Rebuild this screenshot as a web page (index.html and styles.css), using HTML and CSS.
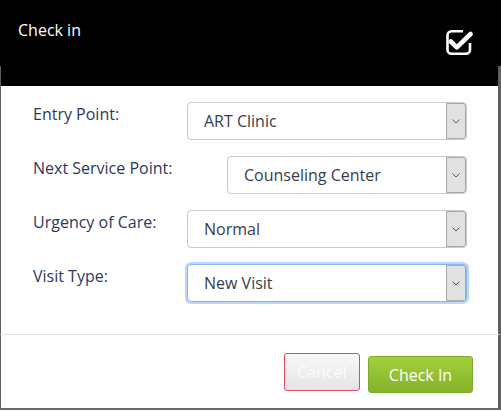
FILE: index.html
```html
<!DOCTYPE html>
<html>
<head>
<meta charset="utf-8">
<link rel="stylesheet" href="styles.css">
</head>
<body>
<div class="modal">
  <div class="modal-header">
    <div class="title">Check in</div>
    <svg class="check-icon" width="28" height="26" viewBox="0 0 28 26">
      <path d="M17 2.3 H5.5 A4 4 0 0 0 1.5 6.3 V20.7 A4 4 0 0 0 5.5 24.7 H20 A4 4 0 0 0 24 20.7 V14" fill="none" stroke="#fff" stroke-width="2.6"/>
      <path d="M4.8 12.5 L10.8 18.3 L24.6 5" fill="none" stroke="#fff" stroke-width="4.6" stroke-linejoin="round" stroke-linecap="round"/>
    </svg>
  </div>
  <div class="modal-body">
    <div class="row">
      <div class="label">Entry Point:</div>
      <div class="select"><span class="value">ART Clinic</span><span class="arrow"><svg width="8" height="5" viewBox="0 0 8 5"><path d="M0.5 0.5 L4 4 L7.5 0.5" fill="none" stroke="#555" stroke-width="1"/></svg></span></div>
    </div>
    <div class="row">
      <div class="label">Next Service Point:</div>
      <div class="select select-short"><span class="value">Counseling Center</span><span class="arrow"><svg width="8" height="5" viewBox="0 0 8 5"><path d="M0.5 0.5 L4 4 L7.5 0.5" fill="none" stroke="#555" stroke-width="1"/></svg></span></div>
    </div>
    <div class="row">
      <div class="label">Urgency of Care:</div>
      <div class="select"><span class="value">Normal</span><span class="arrow"><svg width="8" height="5" viewBox="0 0 8 5"><path d="M0.5 0.5 L4 4 L7.5 0.5" fill="none" stroke="#555" stroke-width="1"/></svg></span></div>
    </div>
    <div class="row">
      <div class="label">Visit Type:</div>
      <div class="select select-focus"><span class="value">New Visit</span><span class="arrow"><svg width="8" height="5" viewBox="0 0 8 5"><path d="M0.5 0.5 L4 4 L7.5 0.5" fill="none" stroke="#555" stroke-width="1"/></svg></span></div>
    </div>
  </div>
  <div class="modal-footer">
    <button class="btn btn-cancel">Cancel</button>
    <button class="btn btn-primary">Check In</button>
  </div>
</div>
</body>
</html>
```

FILE: styles.css
```css
html, body {
  margin: 0;
  padding: 0;
  background: #fff;
}
body {
  width: 501px;
  height: 411px;
  overflow: hidden;
  font-family: "Open Sans", "Liberation Sans", sans-serif;
}
.modal {
  display: flex;
  flex-direction: column;
  height: 411px;
  box-sizing: border-box;
}
.modal-header {
  height: 86px;
  box-sizing: border-box;
  display: flex;
  justify-content: space-between;
  align-items: flex-start;
  padding: 19px 27px 0 18px;
  background:
    linear-gradient(#000 66px, transparent 66px),
    linear-gradient(to right, #5f5f5f 1px, #000 1px, #000 calc(100% - 3px), #5f5f5f calc(100% - 3px));
}
.title {
  color: #fff;
  font-size: 16px;
  line-height: 22px;
}
.check-icon {
  display: block;
  margin-top: 10px;
}
.modal-body {
  border-left: 1px solid #5f5f5f;
  border-right: 3px solid #5f5f5f;
  padding: 16px 0 32px 32px;
  display: flex;
  flex-direction: column;
  gap: 16px;
  border-bottom: 1px solid #e5e5e5;
}
.row {
  display: flex;
  align-items: flex-start;
}
.label {
  width: 154px;
  flex: none;
  font-size: 16px;
  line-height: 22px;
  padding-top: 1px;
  color: #2f385c;
}
.select {
  width: 280px;
  height: 38px;
  box-sizing: border-box;
  border: 1px solid #c9c9d0;
  border-radius: 4px;
  background: #fff;
  display: flex;
  align-items: stretch;
  justify-content: space-between;
}
.select-short {
  width: 240px;
  margin-left: 40px;
}
.select-focus {
  border-color: #86b6ef;
  box-shadow: 0 0 0 2px #bcd7fb;
}
.value {
  display: flex;
  align-items: center;
  padding-left: 16px;
  font-size: 16px;
  color: #373c50;
}
.arrow {
  width: 20px;
  box-sizing: border-box;
  background: #e1e1e1;
  border: 1px solid #a9a9a9;
  border-radius: 0 3px 3px 0;
  display: flex;
  align-items: center;
  justify-content: center;
}
.arrow svg {
  display: block;
}
.modal-footer {
  flex: 1;
  border-left: 1px solid #5f5f5f;
  border-right: 3px solid #5f5f5f;
  border-bottom: 2px solid #6a6a6a;
  margin-bottom: 1px;
  display: flex;
  justify-content: flex-end;
  align-items: flex-start;
  gap: 8px;
  padding: 18px 25px 0 0;
}
.btn {
  font-family: "Open Sans", "Liberation Sans", sans-serif;
  font-size: 16px;
  border-radius: 3px;
  padding: 0;
  margin: 0;
  cursor: pointer;
}
.btn-cancel {
  width: 76px;
  height: 38px;
  border: 1px solid #df4a5f;
  background: linear-gradient(#f8f8f8, #e4e4e4);
  color: #fbfbfb;
}
.btn-primary {
  width: 105px;
  height: 37px;
  margin-top: 3px;
  border: 1px solid #7fa92c;
  background: linear-gradient(#a2d03b, #85b32a);
  color: #fff;
}
```
